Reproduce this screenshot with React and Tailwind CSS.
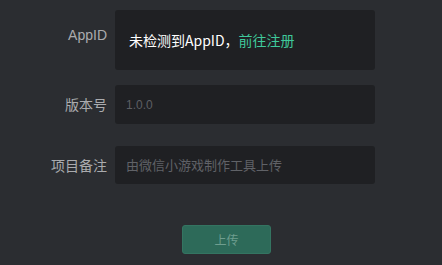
import React from 'react';

const font = { fontFamily: '"Noto Sans CJK SC", "Liberation Sans", sans-serif' };

const Row = ({ label, children, className, labelClass }) => (
  <div className={`flex ${className}`}>
    <div className={`w-[107px] shrink-0 text-right text-[14px] text-[#aaabae] ${labelClass}`}>{label}</div>
    <div className="ml-2">{children}</div>
  </div>
);

export default function App() {
  return (
    <div className="w-[442px] h-[265px] bg-[#2b2d31] overflow-hidden pt-[10px]" style={font}>
      <Row label="AppID" labelClass="pt-[15px] font-['Liberation_Sans']">
        <div className="w-[260px] h-[60px] rounded-[3px] bg-[#1f2023] flex items-center pl-[14px] text-[14px] text-white">
          未检测到AppID，<span className="text-[#3fc99b]">前往注册</span>
        </div>
      </Row>
      <Row label="版本号" className="mt-[15px]" labelClass="leading-[39px]">
        <div className="w-[260px] h-[39px] rounded-[3px] bg-[#1f2023] flex items-center pl-[11px] text-[12px] text-[#5d5f63] font-['Liberation_Sans']">
          1.0.0
        </div>
      </Row>
      <Row label="项目备注" className="mt-[22px]" labelClass="leading-[38px]">
        <div className="w-[260px] h-[38px] rounded-[3px] bg-[#1f2023] flex items-center pl-[11px] text-[13px] text-[#606267]">
          由微信小游戏制作工具上传
        </div>
      </Row>
      <div className="mt-[41px] ml-[182px] w-[89px] h-[29px] rounded-[3px] bg-[#2d6a59] border border-[#347461] flex items-center justify-center text-[12px] text-[#6f9e8f]">
        上传
      </div>
    </div>
  );
}
